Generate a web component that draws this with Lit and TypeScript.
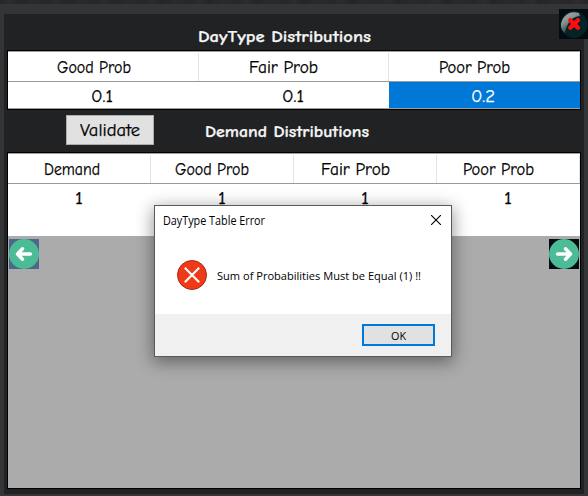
import { LitElement, html, css } from "lit";
import { customElement, property } from "lit/decorators.js";

/** A single line of text set to an exact advance width. */
@customElement("fit-label")
class FitLabel extends LitElement {
  @property() text = "";
  @property({ type: Number }) width = 50;
  static styles = css`
    :host { display: block; flex: none; height: 20px; }
    svg { display: block; overflow: visible; }
    text { fill: currentColor; stroke: currentColor; stroke-width: var(--ink, 0); }
  `;
  render() {
    return html`<svg width=${this.width} height="20">
      <text x="0" y="15" textLength=${this.width} lengthAdjust="spacingAndGlyphs">${this.text}</text>
    </svg>`;
  }
}

const label = (text: string, width: number) =>
  html`<fit-label .text=${text} .width=${width}></fit-label>`;

@customElement("app-root")
class AppRoot extends LitElement {
  static styles = css`
    * { box-sizing: border-box; }
    :host {
      display: block; position: relative; width: 588px; height: 496px; overflow: hidden;
      background: #343536; color: #000; --ink: .25px;
      font: 17px "Comic Sans MS", "Comic Neue", "Open Sans", "Noto Sans", sans-serif;
    }
    .strip {
      height: 4px;
      background: repeating-linear-gradient(97deg, #272727 0, #2c2c2c 11px, #252525 19px, #2a2a2a 34px, #272727 47px);
    }
    .window { margin: 10px 4px 0; height: 480px; background: #212224; padding: 0 3px; }
    .heading { height: 36px; display: flex; padding: 13px 0 0 191px; color: #f5f5f5; font-weight: 700; font-size: 16px; }
    .grid { border: 1px solid #000; width: 574px; background: #ababab; }
    .top { height: 60px; display: grid; grid-template-rows: 31px 26px 1px; background: #a0a0a0; }
    .head { display: grid; border-top: 1px solid #a0a0a0; border-bottom: 1px solid #999; height: 31px; background: #fff; }
    .three { grid-template-columns: 191px 190px 1fr; }
    .four { grid-template-columns: 143px 143px 143px 1fr; }
    .head > div { border-right: 1px solid #e3e3e3; margin-top: 1px; }
    .head > div, .row > div { display: flex; justify-content: center; }
    .head > div { padding: 5px 20px 0 0; }
    .three.head > div:first-child { padding-right: 18px; }
    .four.head > div:first-child { padding-right: 14px; }
    .row { display: grid; background: #fff; }
    .row > div { padding: 5px 3px 0 0; }
    .four.row > div { padding-right: 1px; }
    .row > div.selected { background: #0078d7; color: #fff; padding-right: 4px; }
    .bar { height: 42px; display: flex; padding: 5px 0 0 59px; }
    button { margin: 0; padding: 0; font: inherit; color: inherit; }
    .validate { width: 88px; height: 30px; background: #e1e1e1; border: 1px solid #adadad; display: flex; justify-content: center; padding-top: 5px; }
    .sub { margin: 2px 0 0 51px; padding-top: 5px; color: #f5f5f5; font-weight: 700; font-size: 16px; }
    .bottom { height: 337px; }
    .bottom .row { height: 52px; }
    .nav { display: flex; justify-content: space-between; padding: 3px 1px; }
    svg { display: block; }
    .close { position: absolute; left: 559px; top: 9px; }
    .dialog {
      position: absolute; left: 154px; top: 205px; width: 298px; height: 152px; --ink: 0;
      border: 1px solid #5a5a5a; background: #fff; display: flex; flex-direction: column;
      box-shadow: 0 4px 16px 1px rgba(0, 0, 0, .42);
      font: 12px "Segoe UI", "Open Sans", "Noto Sans", sans-serif;
    }
    .caption { height: 31px; display: flex; justify-content: space-between; padding: 4px 10px 0 8px; }
    .caption svg { margin-top: 5px; }
    .message { flex: 1; display: flex; padding: 23px 0 0 22px; gap: 10px; font-size: 11px; }
    .message fit-label { margin-top: 5px; }
    .actions { height: 42px; background: #f0f0f0; display: flex; justify-content: flex-end; padding: 10px 16px 0 0; font-size: 11px; }
    .ok { width: 73px; height: 22px; border: 2px solid #0078d7; background: #e1e1e1; display: flex; justify-content: center; }
    .ok fit-label { margin-top: -1px; }
  `;

  arrow(left: boolean) {
    return html`<svg width="30" height="30" viewBox="0 0 30 30">
      <rect width="30" height="30" fill=${left ? "#4b6889" : "#030d15"} />
      <circle cx="15" cy="15" r="15" fill="#4bbc96" />
      <path d=${left ? "M21.5 15H9M13.5 9.8L8.5 15L13.5 20.2" : "M8.5 15H21M16.5 9.8L21.5 15L16.5 20.2"}
        fill="none" stroke="#fff" stroke-width="3.4" stroke-linecap="round" stroke-linejoin="round" />
    </svg>`;
  }

  render() {
    return html`
      <div class="strip"></div>
      <main class="window">
        <div class="heading">${label("DayType Distributions", 173)}</div>
        <section class="grid top">
          <div class="head three">
            <div>${label("Good Prob", 74)}</div>
            <div>${label("Fair Prob", 69)}</div>
            <div>${label("Poor Prob", 71)}</div>
          </div>
          <div class="row three">
            <div>${label("0.1", 22)}</div>
            <div>${label("0.1", 22)}</div>
            <div class="selected">${label("0.2", 24)}</div>
          </div>
        </section>
        <div class="bar">
          <button class="validate">${label("Validate", 60)}</button>
          <div class="sub">${label("Demand Distributions", 164)}</div>
        </div>
        <section class="grid bottom">
          <div class="head four">
            <div>${label("Demand", 56)}</div>
            <div>${label("Good Prob", 74)}</div>
            <div>${label("Fair Prob", 69)}</div>
            <div>${label("Poor Prob", 71)}</div>
          </div>
          <div class="row four">
            ${[0, 1, 2, 3].map(() => html`<div>${label("1", 8)}</div>`)}
          </div>
          <div class="nav">${this.arrow(true)}${this.arrow(false)}</div>
        </section>
      </main>
      <svg class="close" width="30" height="30" viewBox="0 0 30 30">
        <defs>
          <linearGradient id="shine" x1="0" y1="0" x2=".6" y2="1">
            <stop offset="0" stop-color="#a3adad" /><stop offset=".45" stop-color="#879292" /><stop offset="1" stop-color="#042024" />
          </linearGradient>
        </defs>
        <rect width="30" height="30" fill="#060b12" />
        <circle cx="15" cy="15.5" r="13.5" fill="#032326" />
        <path d="M2 17A13.3 13.3 0 0 1 20 4L21 7Q9 8 6 24Q2 21 2 17Z" fill="url(#shine)" />
        <path d="M11.3 11.2L18.9 18.8M18.9 11.2L11.3 18.8" stroke="#fc0d0d" stroke-width="4.4" stroke-linecap="round" />
      </svg>
      <div class="dialog" role="dialog">
        <div class="caption">
          ${label("DayType Table Error", 102)}
          <svg width="10" height="10" viewBox="0 0 10 10"><path d="M0 0L10 10M10 0L0 10" stroke="#000" stroke-width="1.1" /></svg>
        </div>
        <div class="message">
          <svg width="30" height="30" viewBox="0 0 30 30">
            <circle cx="15" cy="15" r="14.5" fill="#f03a17" stroke="#a52a18" />
            <path d="M7.8 7.8L22.2 22.2M22.2 7.8L7.8 22.2" stroke="#fff" stroke-width="2.1" />
          </svg>
          ${label("Sum of Probabilities Must be Equal (1) !!", 204)}
        </div>
        <div class="actions"><button class="ok">${label("OK", 15)}</button></div>
      </div>
    `;
  }
}
